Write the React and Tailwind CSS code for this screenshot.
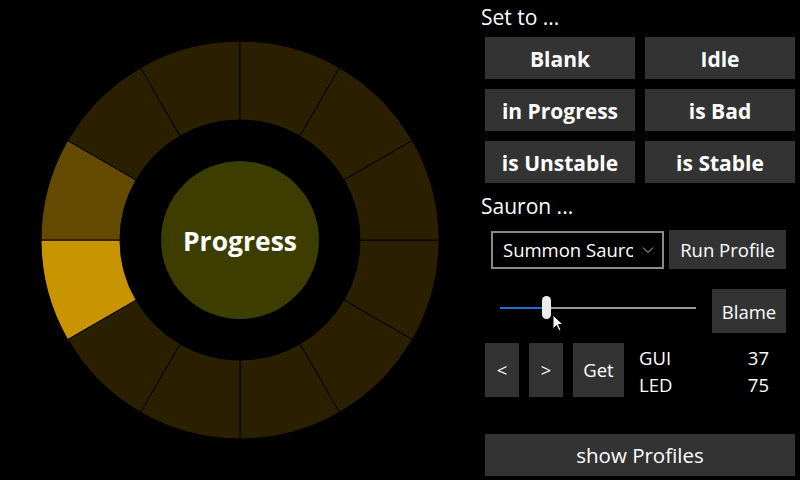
import React from "react";

const CX = 200, CY = 200, RO = 199, RI = 120;

function seg(i) {
  const a0 = (i * 30 * Math.PI) / 180;
  const a1 = ((i + 1) * 30 * Math.PI) / 180;
  const p = (r, a) => `${(CX + r * Math.cos(a)).toFixed(2)} ${(CY + r * Math.sin(a)).toFixed(2)}`;
  return `M ${p(RI, a0)} L ${p(RO, a0)} A ${RO} ${RO} 0 0 1 ${p(RO, a1)} L ${p(RI, a1)} A ${RI} ${RI} 0 0 0 ${p(RI, a0)} Z`;
}

function fillFor(i) {
  if (i === 5) return "#c89400";
  if (i === 6) return "#634a00";
  return "#2a2000";
}

function Ring() {
  return (
    <svg width="400" height="400" viewBox="0 0 400 400">
      {Array.from({ length: 12 }, (_, i) => (
        <path key={i} d={seg(i)} fill={fillFor(i)} stroke="#000" strokeWidth="1" />
      ))}
      <circle cx={CX} cy={CY} r="79" fill="#3d3d00" />
      <text
        x={CX}
        y={CY + 11}
        textAnchor="middle"
        fill="#ffffff"
        fontWeight="700"
        fontSize="26.5"
        fontFamily="'Open Sans', 'Noto Sans', sans-serif"
      >
        Progress
      </text>
    </svg>
  );
}

const font = { fontFamily: "'Open Sans', 'Noto Sans', sans-serif" };

function BoldBtn({ children }) {
  return (
    <div className="h-[42px] pt-[3px] bg-[#333333] flex items-center justify-center text-white font-bold text-[21px]">
      {children}
    </div>
  );
}

export default function App() {
  return (
    <div className="w-[800px] h-[480px] bg-black flex overflow-hidden relative" style={font}>
      <div className="w-[480px] shrink-0 pl-[40px] pt-[40px]">
        <Ring />
      </div>
      <div className="flex-1 flex flex-col pl-[1px]">
        <div className="text-white text-[21px] leading-[28px] mt-[3px]">Set to ...</div>
        <div className="ml-[4px] mt-[6px] w-[310px] grid grid-cols-2 gap-[10px]">
          <BoldBtn>Blank</BoldBtn>
          <BoldBtn>Idle</BoldBtn>
          <BoldBtn>in Progress</BoldBtn>
          <BoldBtn>is Bad</BoldBtn>
          <BoldBtn>is Unstable</BoldBtn>
          <BoldBtn>is Stable</BoldBtn>
        </div>
        <div className="text-white text-[21px] leading-[28px] mt-[9px]">Sauron ...</div>
        <div className="flex mt-[10px] ml-[10px] items-start">
          <div className="w-[173px] h-[38px] border-2 border-[#8a8a8a] flex items-center pl-[10px] pr-[8px] mt-[1px]">
            <span className="text-white text-[18.5px] whitespace-nowrap overflow-hidden w-[130px]">Summon Sauron</span>
            <svg width="12" height="8" viewBox="0 0 12 8" className="ml-auto">
              <path d="M1 1.5 L6 6.5 L11 1.5" stroke="#cfcfcf" strokeWidth="1" fill="none" />
            </svg>
          </div>
          <div className="ml-[5px] w-[117px] h-[39px] pt-[1px] bg-[#333333] flex items-center justify-center text-white text-[18.5px]">
            Run Profile
          </div>
        </div>
        <div className="flex mt-[20px] ml-[19px] items-start">
          <div className="relative w-[196px] h-[44px]">
            <div className="absolute left-0 top-[18px] w-[196px] h-[2px] bg-[#9a9a9a]" />
            <div className="absolute left-0 top-[18px] w-[46px] h-[2px] bg-[#1f6fd0]" />
            <div className="absolute left-[42px] top-[7px] w-[9px] h-[23px] rounded-full bg-[#ececec]" />
            <svg className="absolute left-[52px] top-[25px]" width="14" height="20" viewBox="0 0 14 20">
              <path d="M1 1 L1 15 L4.5 11.5 L7 17 L9 16 L6.5 10.5 L11 10.5 Z" fill="#ffffff" stroke="#000" strokeWidth="1" />
            </svg>
          </div>
          <div className="ml-[16px] w-[74px] h-[44px] pt-[1px] bg-[#333333] flex items-center justify-center text-white text-[18.5px]">
            Blame
          </div>
        </div>
        <div className="flex mt-[10px] ml-[4px] items-start">
          <div className="w-[34px] h-[54px] bg-[#333333] flex items-center justify-center text-white text-[18.5px]">&lt;</div>
          <div className="ml-[10px] w-[34px] h-[54px] bg-[#333333] flex items-center justify-center text-white text-[18.5px]">&gt;</div>
          <div className="ml-[10px] w-[51px] h-[54px] bg-[#333333] flex items-center justify-center text-white text-[18.5px]">Get</div>
          <div className="ml-[15px] w-[130px] mt-[1px] text-white text-[18.5px] leading-[27px]">
            <div className="flex"><span>GUI</span><span className="ml-auto">37</span></div>
            <div className="flex"><span>LED</span><span className="ml-auto">75</span></div>
          </div>
        </div>
        <div className="ml-[4px] mt-[36px] w-[310px] h-[42px] bg-[#333333] flex items-center justify-center text-white text-[20.5px]">
          show Profiles
        </div>
      </div>
    </div>
  );
}
